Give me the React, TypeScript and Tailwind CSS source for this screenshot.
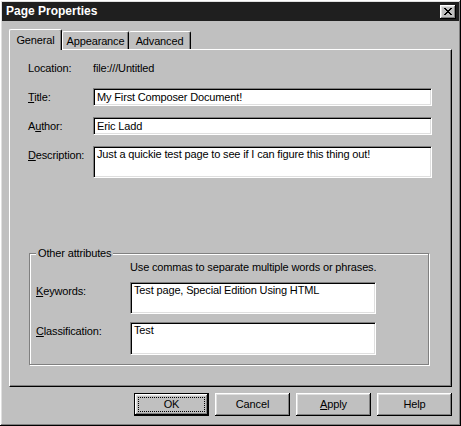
const raised =
  'shadow-[inset_-1px_-1px_0_#000,inset_1px_1px_0_#fff,inset_-2px_-2px_0_#808080,inset_2px_2px_0_#dfdfdf]'
const sunken =
  'bg-white border border-t-[#808080] border-l-[#808080] border-r-white border-b-white shadow-[inset_1px_1px_0_#000,inset_-1px_-1px_0_#dfdfdf]'

function Label({ text, u }: { text: string; u?: number }) {
  if (u === undefined) {
    return <div className="pt-[3px] leading-[13px]">{text}</div>
  }
  return (
    <div className="pt-[3px] leading-[13px]">
      {text.slice(0, u)}
      <span className="underline underline-offset-[1px]">{text[u]}</span>
      {text.slice(u + 1)}
    </div>
  )
}

function Box({ value, multi, className = '' }: { value: string; multi?: boolean; className?: string }) {
  return (
    <div className={`${sunken} ${multi ? 'pt-[1px]' : 'pt-[2px]'} pl-[3px] leading-[13px] whitespace-nowrap overflow-hidden ${className}`}>
      {value}
    </div>
  )
}

function Btn({ children, primary }: { children: React.ReactNode; primary?: boolean }) {
  if (primary) {
    return (
      <div className="w-[75px] h-[23px] border border-black">
        <div className={`w-full h-full ${raised} p-[3px]`}>
          <div className="w-full h-full border border-dotted border-black flex items-center justify-center leading-[13px]">
            {children}
          </div>
        </div>
      </div>
    )
  }
  return (
    <div className={`w-[75px] h-[23px] ${raised} flex items-center justify-center leading-[13px]`}>{children}</div>
  )
}

export default function App() {
  return (
    <div
      className={`w-[461px] h-[426px] bg-[#c0c0c0] p-[2px] flex flex-col text-[11px] tracking-[-0.15px] text-black ${raised}`}
      style={{ fontFamily: '"Liberation Sans", Arial, sans-serif' }}
    >
      {/* title bar */}
      <div className="h-[19px] bg-[#1f1f1f] flex items-center justify-between pl-[4px] pr-[3px]">
        <span className="text-white font-bold text-[12px] leading-[15px] tracking-normal">Page Properties</span>
        <div className={`w-[16px] h-[14px] bg-[#c0c0c0] ${raised} flex items-center justify-center`}>
          <svg width="8" height="7" viewBox="0 0 8 7" shapeRendering="crispEdges">
            <path
              d="M0 0h2v1h1v1h2V1h1V0h2v1H7v1H6v1H5v1h1v1h1v1h1v1H6V6H5V5H3v1H2v1H0V6h1V5h1V4h1V3H2V2H1V1H0z"
              fill="#000"
            />
          </svg>
        </div>
      </div>

      <div className="flex-1 flex flex-col px-[7px]">
        {/* tabs */}
        <div className="mt-[8px] h-[20px] flex items-end">
          <div className="relative z-10 w-[53px] h-[21px] -mb-[1px] bg-[#c0c0c0] border-l border-t border-white rounded-tl-[2px] rounded-tr-[2px] border-r border-r-black shadow-[inset_-1px_0_0_#808080] flex items-start justify-center pt-[4px] leading-[13px]">
            General
          </div>
          <div className="w-[67px] h-[18px] border-l border-t border-white rounded-t-[2px] border-r border-r-black shadow-[inset_-1px_0_0_#808080] flex items-start justify-center pt-[3px] leading-[13px]">
            Appearance
          </div>
          <div className="w-[62px] h-[18px] border-t border-white rounded-t-[2px] border-r border-r-black shadow-[inset_-1px_0_0_#808080] flex items-start justify-center pt-[3px] leading-[13px]">
            Advanced
          </div>
        </div>

        {/* panel */}
        <div className="h-[338px] border border-t-white border-l-white border-r-black border-b-black shadow-[inset_-1px_-1px_0_#808080] px-[18px] pt-[9px] flex flex-col">
          <div className="grid grid-cols-[65px_339px] gap-y-[11px]">
            <Label text="Location:" />
            <div className="h-[18px] pt-[3px] leading-[13px]">file:///Untitled</div>

            <Label text="Title:" u={0} />
            <Box value="My First Composer Document!" className="h-[18px]" />

            <Label text="Author:" u={1} />
            <Box value="Eric Ladd" className="h-[18px]" />

            <Label text="Description:" u={0} />
            <Box value="Just a quickie test page to see if I can figure this thing out!" multi className="h-[32px]" />
          </div>

          <fieldset className="mt-[69px] ml-[1px] w-[400px] border border-[#808080] shadow-[inset_1px_1px_0_#fff,1px_1px_0_#fff] px-[6px] pb-[9px]">
            <legend className="px-[2px] bg-[#c0c0c0] leading-[13px]">Other attributes</legend>
            <div className="grid grid-cols-[94px_246px] gap-y-[8px] pt-[1px]">
              <div />
              <div className="leading-[13px] whitespace-nowrap">Use commas to separate multiple words or phrases.</div>

              <Label text="Keywords:" u={0} />
              <Box value="Test page, Special Edition Using HTML" multi className="h-[32px]" />

              <Label text="Classification:" u={0} />
              <Box value="Test" multi className="h-[33px]" />
            </div>
          </fieldset>
        </div>

        {/* buttons */}
        <div className="mt-[6px] flex justify-end gap-[6px]">
          <Btn primary>OK</Btn>
          <Btn>Cancel</Btn>
          <Btn>
            <span className="underline underline-offset-[1px]">A</span>pply
          </Btn>
          <Btn>Help</Btn>
        </div>
      </div>
    </div>
  )
}
